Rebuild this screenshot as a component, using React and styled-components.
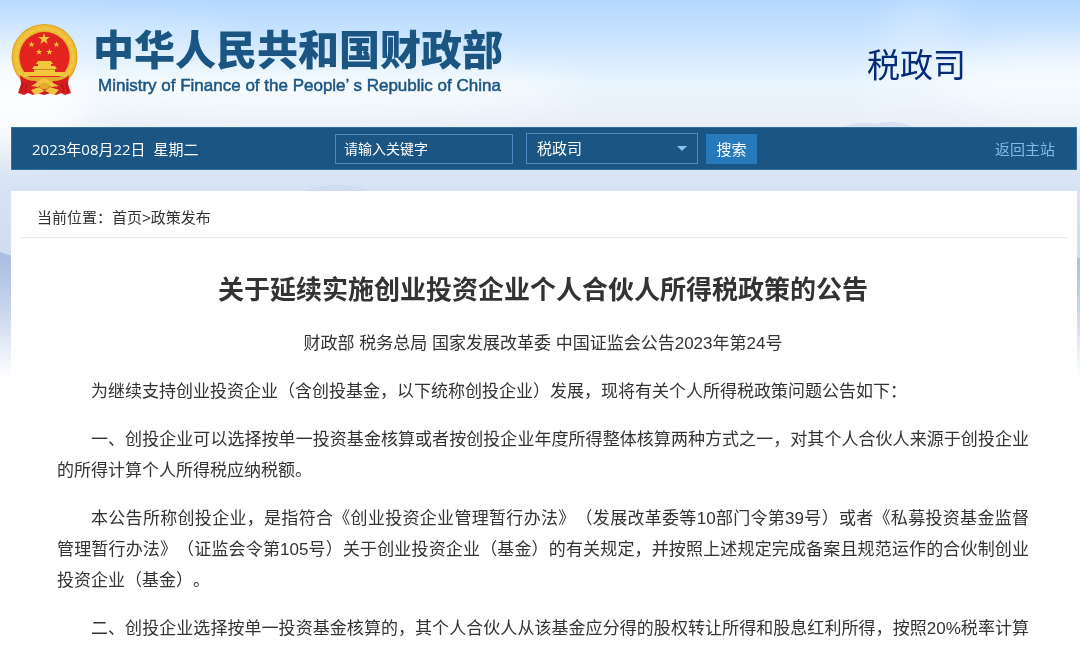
import styled, { createGlobalStyle } from "styled-components";

const GlobalStyle = createGlobalStyle`
  * {
    box-sizing: border-box;
  }
  body {
    margin: 0;
    color: #333;
    background: #fff;
    font-family: "Liberation Sans", "Noto Sans CJK SC", sans-serif;
    text-spacing-trim: space-all;
  }
`;

const Page = styled.div`
  position: relative;
  padding: 0 3px 0 11px;
`;

const Sky = styled.svg`
  position: absolute;
  top: 0;
  left: 0;
  width: 100%;
  height: 420px;
  z-index: -1;
`;

const Header = styled.header`
  display: flex;
  align-items: center;
  justify-content: space-between;
  padding: 24px 111px 31px 0;
`;

const Brand = styled.a`
  display: flex;
  align-items: center;
  gap: 15px;
  color: #1a5583;
  text-decoration: none;
`;

const Emblem = styled.svg`
  width: 67px;
  height: 72px;
`;

const BrandText = styled.div`
  display: flex;
  flex-direction: column;
  padding-top: 2px;
`;

const BrandName = styled.span`
  font-size: 41px;
  font-weight: 900;
  line-height: 50px;
`;

const BrandEnglish = styled.span`
  padding-left: 5px;
  font-size: 17px;
  line-height: 20px;
  -webkit-text-stroke: 0.5px #1a5583;
`;

const Department = styled.h2`
  margin: 0;
  padding-top: 12px;
  color: #032b78;
  font-size: 33px;
  font-weight: 400;
  line-height: 40px;
`;

const Toolbar = styled.div`
  display: flex;
  align-items: center;
  height: 43px;
  padding: 0 21px 0 20px;
  border: 1px solid #34709f;
  background: #1a5583;
  color: #fff;
  font-size: 15px;
`;

const Today = styled.span`
  flex: 0 0 303px;
  font-family: "Open Sans", "Noto Sans CJK SC", sans-serif;
  white-space: pre;
`;

const Search = styled.form`
  display: flex;
  align-items: center;
`;

const Keyword = styled.input`
  width: 178px;
  height: 30px;
  margin-right: 13px;
  padding: 0 8px;
  border: 1px solid #4c8cc0;
  border-radius: 0;
  background: transparent;
  color: #fff;
  font: 14px "Liberation Sans", "Noto Sans CJK SC", sans-serif;
  &::placeholder {
    color: #fff;
    opacity: 1;
  }
`;

const SelectBox = styled.div`
  position: relative;
  margin-right: 8px;
`;

const Scope = styled.select`
  display: block;
  width: 172px;
  height: 31px;
  padding: 0 10px;
  border: 1px solid #4c8cc0;
  border-radius: 0;
  appearance: none;
  background: transparent;
  color: #fff;
  font: 15px "Liberation Sans", "Noto Sans CJK SC", sans-serif;
`;

const Caret = styled.span`
  position: absolute;
  top: 13px;
  right: 11px;
  border: 5px solid transparent;
  border-top-color: #8cc0ee;
  border-bottom: 0;
  pointer-events: none;
`;

const SearchButton = styled.button`
  width: 51px;
  height: 30px;
  padding: 0;
  border: none;
  background: #2679bb;
  color: #fff;
  font: 15px "Liberation Sans", "Noto Sans CJK SC", sans-serif;
  cursor: pointer;
`;

const BackLink = styled.a`
  margin-left: auto;
  color: #83b9e6;
  text-decoration: none;
`;

const Panel = styled.main`
  margin-top: 21px;
  padding: 0 10px;
  background: #fff;
`;

const Breadcrumb = styled.nav`
  padding: 15px 16px 7px;
  border-bottom: 1px solid #e8e8e8;
  font-size: 15px;
  line-height: 24px;
  a {
    color: inherit;
    text-decoration: none;
  }
`;

const Article = styled.article`
  padding: 32px 38px 0 36px;
`;

const Title = styled.h1`
  margin: 0;
  font-size: 26px;
  font-weight: 700;
  line-height: 40px;
  text-align: center;
`;

const Issuer = styled.p`
  margin: 18px 0 17px;
  font-size: 17px;
  line-height: 31px;
  text-align: center;
`;

const Paragraph = styled.p`
  margin: 0 0 17px;
  font-size: 17px;
  line-height: 31px;
  text-align: justify;
  text-align-last: ${({ $continues }) => ($continues ? "justify" : "auto")};
  text-indent: 2em;
  &:last-child {
    margin-bottom: 0;
  }
`;

const paragraphs = [
  "为继续支持创业投资企业（含创投基金，以下统称创投企业）发展，现将有关个人所得税政策问题公告如下：",
  "一、创投企业可以选择按单一投资基金核算或者按创投企业年度所得整体核算两种方式之一，对其个人合伙人来源于创投企业的所得计算个人所得税应纳税额。",
  "本公告所称创投企业，是指符合《创业投资企业管理暂行办法》（发展改革委等10部门令第39号）或者《私募投资基金监督管理暂行办法》（证监会令第105号）关于创业投资企业（基金）的有关规定，并按照上述规定完成备案且规范运作的合伙制创业投资企业（基金）。",
  "二、创投企业选择按单一投资基金核算的，其个人合伙人从该基金应分得的股权转让所得和股息红利所得，按照20%税率计算",
];

const star = "M0-6 1.4-1.9 5.7-1.9 2.3.7 3.5 4.9 0 2.3-3.5 4.9-2.3.7-5.7-1.9-1.4-1.9Z";

const NationalEmblem = () => (
  <Emblem viewBox="0 0 67 72" aria-hidden="true">
    <circle cx="33.5" cy="33" r="33" fill="#d9a322" />
    <circle cx="33.5" cy="33" r="32" fill="#edbd35" />
    <circle cx="33.5" cy="33" r="28.5" fill="none" stroke="#f2c946" strokeWidth="2" strokeDasharray="5 2" />
    <circle cx="33.5" cy="33" r="25.5" fill="#d9981e" />
    <circle cx="33.5" cy="33" r="25" fill="#e3231f" />
    <g fill="#f3c63c">
      <path d={star} transform="translate(33 15)" />
      <path d={star} transform="translate(20.5 20.5) scale(.55)" />
      <path d={star} transform="translate(45.5 20.5) scale(.55)" />
      <path d={star} transform="translate(28 28) scale(.55)" />
      <path d={star} transform="translate(38.5 28) scale(.55)" />
      <path d="M27 37h13l2 3H25ZM27 40h13v3H27ZM23 42h21l2 3H21ZM23 45h21v3H23ZM13 48h41v4H13Z" />
    </g>
    <path d="M23 45.5h21" stroke="#c98a18" />
    <path d="M11 53h45L50 59 33.5 63 17 59Z" fill="#e2a92c" />
    <path d="M9 51Q15 57 25 57L28 64 22 71 17 69 13 71 7 69 10 60ZM58 51Q52 57 42 57L39 64 45 71 50 69 54 71 60 69 57 60Z" fill="#d51e20" />
    <path d="M26 62h15l4 9-5-2-7 2-7-2-4 2Z" fill="#ca1b1d" />
    <path d="M12 59 10 68M16 60 14 68M55 59 57 68M51 60 53 68" stroke="#a81015" />
    <path d="M20 62 27 58Q33 51 40 58L48 62 40 63 33.5 59 27 63ZM20 66 28 63 33.5 67 39 63 48 66 43 71 34 67 24 71Z" fill="#f2c443" />
    <ellipse cx="33.5" cy="62" rx="5" ry="3.5" fill="#e4aa2c" />
  </Emblem>
);

const SkyBackdrop = () => (
  <Sky viewBox="0 0 1080 420" preserveAspectRatio="none" aria-hidden="true">
    <defs>
      <linearGradient id="air" x2="0" y2="1">
        <stop offset="0" stopColor="#b3d8ff" />
        <stop offset=".1" stopColor="#cce5ff" />
        <stop offset=".2" stopColor="#e9f5fe" />
        <stop offset=".28" stopColor="#eaf0f9" />
        <stop offset=".4" stopColor="#dae5f5" />
        <stop offset=".6" stopColor="#cfdcf1" />
        <stop offset="1" stopColor="#fff" />
      </linearGradient>
      <linearGradient id="ridge" x2="0" y2="1">
        <stop offset="0" stopColor="#a9bde1" />
        <stop offset=".3" stopColor="#c3d1eb" />
        <stop offset=".75" stopColor="#fff" />
      </linearGradient>
      <filter id="soft" x="-50%" y="-100%" width="200%" height="300%">
        <feGaussianBlur stdDeviation="18" />
      </filter>
    </defs>
    <rect width="1080" height="420" fill="url(#air)" />
    <g fill="#fff" filter="url(#soft)">
      <ellipse cx="0" cy="105" rx="90" ry="45" opacity=".8" />
      <ellipse cx="20" cy="40" rx="220" ry="24" opacity=".3" />
      <ellipse cx="300" cy="90" rx="280" ry="18" opacity=".8" />
      <ellipse cx="1060" cy="80" rx="130" ry="36" opacity=".6" />
      <path d="M900 0H960L930 110H860Z" opacity=".25" />
    </g>
    <path d="M300 192Q340 178 372 192ZM840 128Q858 120 876 124 895 118 915 128Z" fill="#c7d4ec" opacity=".5" />
    <path d="M0 252 30 262H1050L1080 258V420H0Z" fill="url(#ridge)" />
  </Sky>
);

const App = () => {
  return (
    <Page>
      <GlobalStyle />
      <SkyBackdrop />
      <Header>
        <Brand href="#">
          <NationalEmblem />
          <BrandText>
            <BrandName>中华人民共和国财政部</BrandName>
            <BrandEnglish>Ministry of Finance of the People’ s Republic of China</BrandEnglish>
          </BrandText>
        </Brand>
        <Department>税政司</Department>
      </Header>
      <Toolbar>
        <Today>2023年08月22日{"  "}星期二</Today>
        <Search onSubmit={(e) => e.preventDefault()}>
          <Keyword aria-label="请输入关键字" placeholder="请输入关键字" />
          <SelectBox>
            <Scope aria-label="税政司">
              <option>税政司</option>
            </Scope>
            <Caret />
          </SelectBox>
          <SearchButton>搜索</SearchButton>
        </Search>
        <BackLink href="#">返回主站</BackLink>
      </Toolbar>
      <Panel>
        <Breadcrumb>
          当前位置：<a href="#">首页</a>&gt;<a href="#">政策发布</a>
        </Breadcrumb>
        <Article>
          <Title>关于延续实施创业投资企业个人合伙人所得税政策的公告</Title>
          <Issuer>财政部 税务总局 国家发展改革委 中国证监会公告2023年第24号</Issuer>
          {paragraphs.map((text) => (
            <Paragraph key={text} $continues={!/[。：]$/.test(text)}>
              {text}
            </Paragraph>
          ))}
        </Article>
      </Panel>
    </Page>
  );
};

export default App;
